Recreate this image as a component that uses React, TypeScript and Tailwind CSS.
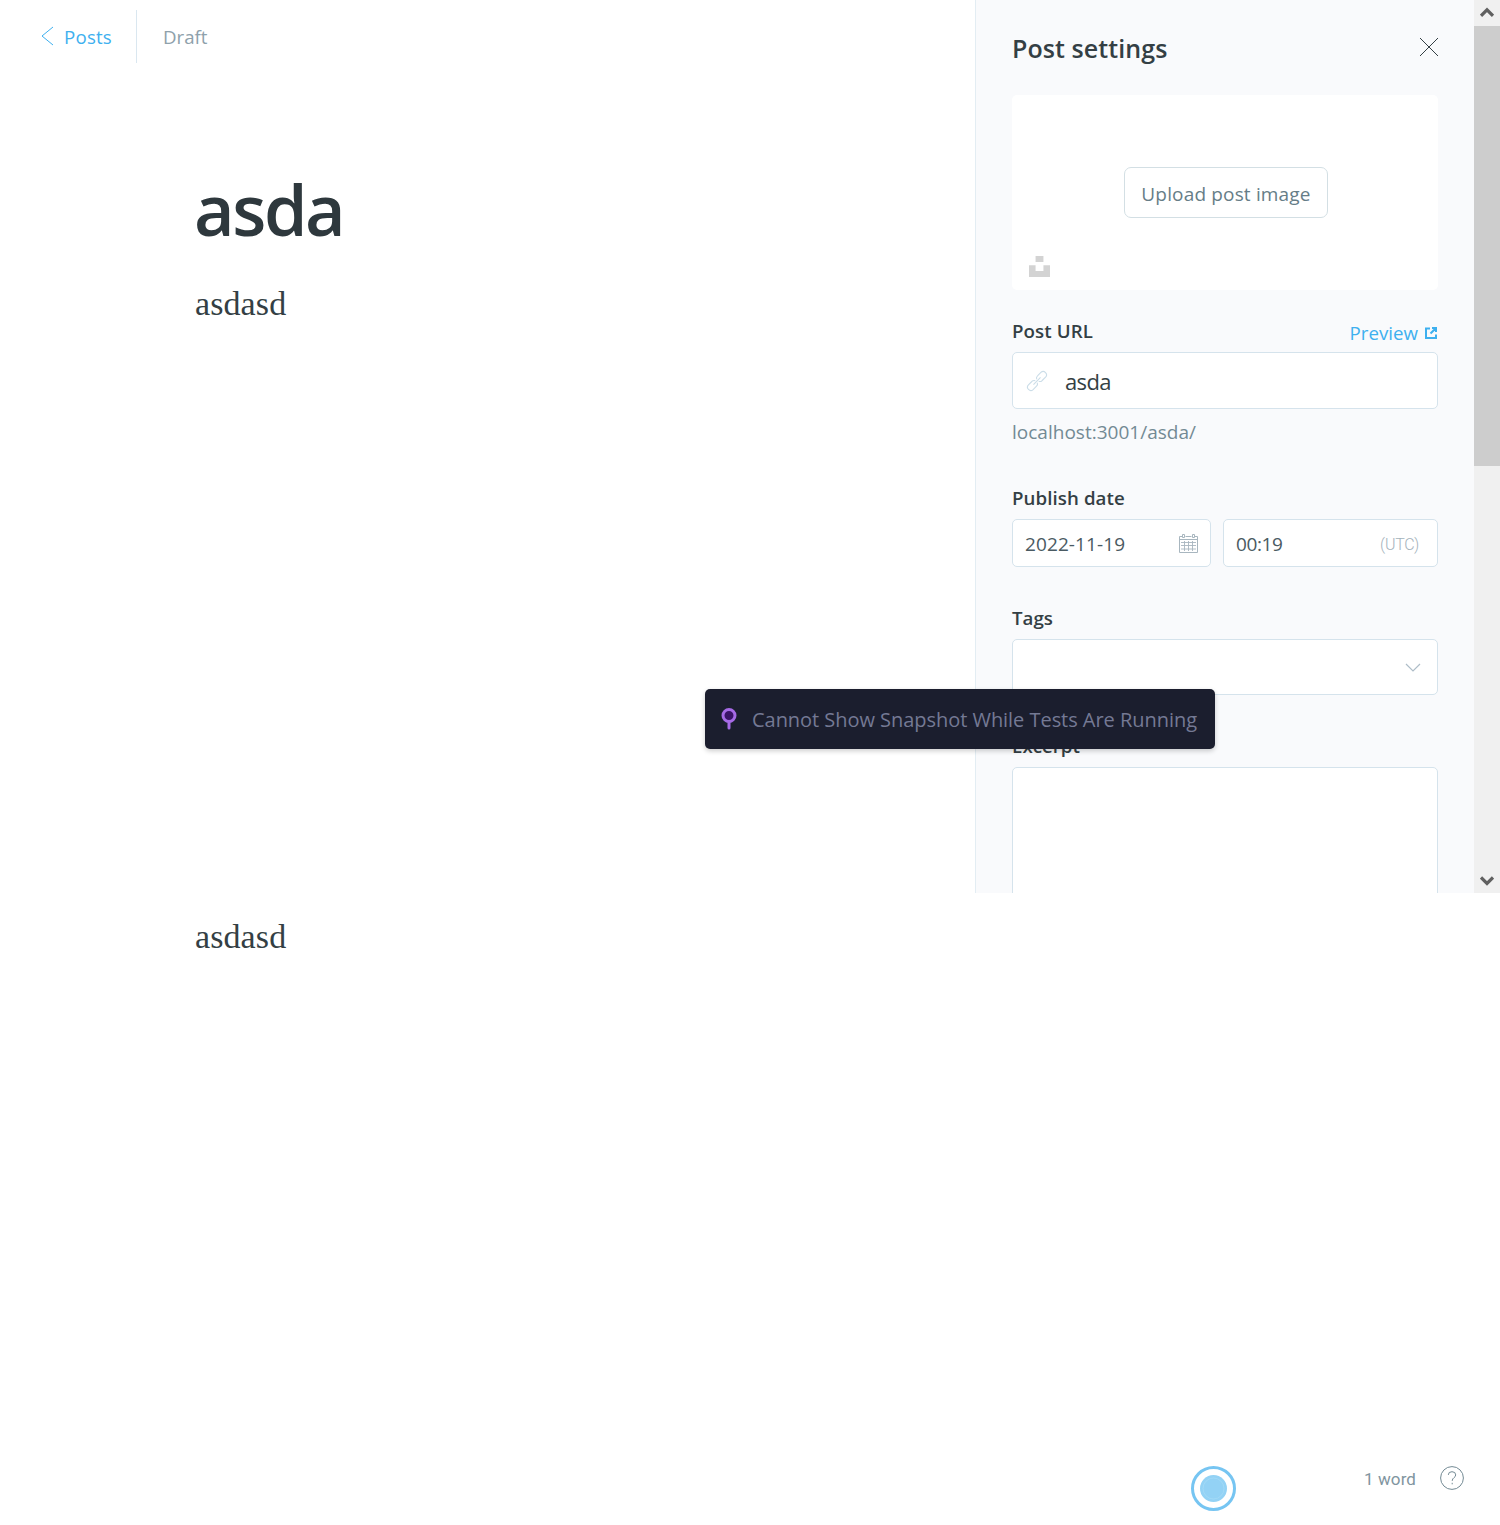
function ScrollChevron({ down }: { down?: boolean }) {
  return (
    <svg viewBox="0 0 14 12" className="h-3 w-3.5">
      <path d={down ? "M1 3.4 7 9.4 13 3.4" : "M1 8.8 7 2.8 13 8.8"} fill="none" stroke="#606060" strokeWidth="3.2" />
    </svg>
  );
}

function LinkIcon() {
  return (
    <svg viewBox="0 0 20 20" className="size-5 overflow-visible text-[#cbdde8]" fill="none" stroke="currentColor" strokeWidth="1.1">
      <g transform="rotate(-45 10 10)">
        <path d="M9 11.4A3.2 3.2 0 0 1 6 13.3H1.2A3.3 3.3 0 0 1-2 10 3.3 3.3 0 0 1 1.2 6.7H6A3.2 3.2 0 0 1 9 8.6M11 8.6a3.2 3.2 0 0 1 3-1.9h4.8A3.3 3.3 0 0 1 22 10a3.3 3.3 0 0 1-3.2 3.3H14a3.2 3.2 0 0 1-3-1.9M5 10h10" />
      </g>
    </svg>
  );
}

function CalendarIcon() {
  return (
    <svg viewBox="0 0 19 19" className="size-[19px] text-[#a8b6bf]" fill="none" stroke="currentColor">
      <path d="M3.5 2.5h-3v16h18v-16h-3M6.5 2.5h6M.5 5.5h18" />
      <path d="M3.5.5h2v3h-2zM13.5.5h2v3h-2z" />
      <path d="M2 8.5h15M2 11.5h15M2 15h15M5.5 7v10M9.5 7v10M13.5 7v10" strokeWidth="0.9" />
    </svg>
  );
}

const label = "h-6 shrink-0 font-semibold leading-6 text-[#343f44]";
const field = "flex shrink-0 items-center rounded-[5px] border border-[#d5e3ec] bg-white";

export default function App() {
  return (
    <div className="relative h-[1525px] w-[1500px] overflow-hidden bg-white font-['Open_Sans',sans-serif] text-[18.7px] leading-6">
      <div className="flex h-[893px]">
        <main className="w-[975px]">
          <header className="flex h-[63px] items-end">
            <a className="flex h-[53px] w-[136px] items-center pl-10 text-[#3eb0ef]">
              <svg viewBox="0 0 14 20" className="mb-0.5 h-5 w-3.5">
                <path d="M13 1 2 10 13 19" fill="none" stroke="currentColor" />
              </svg>
              <span className="ml-[10px] tracking-[0.2px]">Posts</span>
            </a>
            <span className="flex h-[53px] items-center border-l border-[#dae7f0] pl-[26px] text-[#8ea1ab]">Draft</span>
          </header>
          <article className="pl-[195px] pt-[102px]">
            <h1 className="-ml-px text-[70px] font-semibold leading-[88px] tracking-[-2.4px] text-[#2e383d]">asda</h1>
            <p className="mt-[31px] font-['Liberation_Serif',serif] text-[34px] leading-10 tracking-[0.1px] text-[#343f44]">asdasd</p>
            <p className="mt-[593px] font-['Liberation_Serif',serif] text-[34px] leading-10 tracking-[0.1px] text-[#343f44]">asdasd</p>
          </article>
        </main>

        <aside className="flex h-[893px] w-[499px] shrink-0 flex-col overflow-hidden border-l border-[#e3edf3] bg-[#f9fafc] px-9">
          <div className="flex h-[95px] w-[427px] shrink-0 items-center justify-between">
            <h2 className="text-[25px] font-semibold tracking-[0.08px] text-[#343f44]">Post settings</h2>
            <svg viewBox="0 0 20 20" className="-mt-px size-5">
              <path d="m1 1 18 18M19 1 1 19" stroke="#343f44" fill="none" strokeWidth="1" />
            </svg>
          </div>

          <div className="flex h-[195px] w-[426px] shrink-0 flex-col rounded-[5px] bg-white pb-[13px] pl-[17px] pt-[72px]">
            <button className="ml-[95px] h-[51px] w-[204px] whitespace-nowrap rounded-[7px] border border-[#d3dfe4] pt-0.5 text-[19px] tracking-[0.16px] text-[#667d87]">
              Upload post image
            </button>
            <svg viewBox="0 0 32 32" className="mt-auto size-[21px]">
              <path d="M10 9V0h12v9H10zm12 5h10v18H0V14h10v9h12v-9z" fill="#d3d3d3" />
            </svg>
          </div>

          <div className="mt-[29px] flex h-[33px] w-[426px] shrink-0 justify-between">
            <span className={`${label} tracking-[0.1px]`}>Post URL</span>
            <a className="mr-px mt-0.5 flex h-6 items-center text-[#3eb0ef]">
              Preview
              <svg viewBox="0 0 12 12" className="mb-px ml-[7px] size-3" fill="none" stroke="currentColor" strokeWidth="2">
                <path d="M5 1.5H1V11h10V7.5M7 1h4v4M10.8 1.2 5.5 6.5" />
              </svg>
            </a>
          </div>
          <div className={`${field} h-[57px] w-[426px] pl-[14px]`}>
            <LinkIcon />
            <span className="ml-[18px] text-[22px] tracking-[-0.6px] text-[#343f44]">asda</span>
          </div>
          <p className="mt-[11px] h-6 shrink-0 text-[19px] tracking-[0.01px] text-[#738a94]">localhost:3001/asda/</p>

          <div className={`${label} mt-[42px] tracking-[0.08px]`}>Publish date</div>
          <div className="mt-[9px] flex shrink-0 gap-3">
            <div className={`${field} h-12 w-[199px] justify-between pl-3 pr-3`}>
              <span className="pt-0.5 text-[19px] tracking-[0.1px] text-[#4a5a62]">2022-11-19</span>
              <CalendarIcon />
            </div>
            <div className={`${field} h-12 w-[215px] justify-between pl-3 pr-[18px]`}>
              <span className="pt-0.5 text-[19px] tracking-[-0.4px] text-[#4a5a62]">00:19</span>
              <span className="pt-[3px] font-['Roboto',sans-serif] text-base font-light tracking-[-0.3px] text-[#a3b2bb]">(UTC)</span>
            </div>
          </div>

          <div className={`${label} mt-[39px]`}>Tags</div>
          <div className={`${field} mt-[9px] h-14 w-[426px] justify-end pr-4`}>
            <svg viewBox="0 0 16 10" className="mt-px h-2.5 w-4">
              <path d="m1 1 7 7 7-7" fill="none" stroke="#aebdc8" strokeWidth="1.2" />
            </svg>
          </div>

          <div className={`${label} mt-[39px]`}>Excerpt</div>
          <div className="mt-[9px] h-[150px] w-[426px] shrink-0 rounded-[5px] border border-[#d5e3ec] bg-white" />
        </aside>

        <div className="flex w-[26px] shrink-0 flex-col items-center bg-[#f0f0f0]">
          <div className="flex h-[26px] shrink-0 items-center justify-center"><ScrollChevron /></div>
          <div className="h-[440px] w-full bg-[#cdcdcd]" />
          <div className="mt-auto flex h-[26px] items-center justify-center"><ScrollChevron down /></div>
        </div>
      </div>

      <footer className="mt-[573px] flex h-[45px] items-start pl-[1191px]">
        <svg viewBox="0 0 46 46" className="size-[46px]">
          <circle cx="22.5" cy="22.5" r="21" fill="none" stroke="#76c5f2" strokeWidth="3" />
          <circle cx="22.5" cy="22.5" r="13.5" fill="#93d2f5" />
          <circle cx="22.5" cy="22.5" r="10.5" fill="none" stroke="#a5daf6" strokeWidth="0.8" />
        </svg>
        <span className="ml-[127px] mt-px w-[52px] whitespace-nowrap font-['Roboto',sans-serif] text-[17px] font-normal tracking-[0.1px] text-[#8195a0]">1 word</span>
        <svg viewBox="0 0 24 24" className="ml-6 size-6" fill="none" stroke="#738a94">
          <circle cx="12" cy="12" r="11.4" />
          <path d="M8.3 8.9a3.7 3.2 0 0 1 7.4 0c0 2.9-3.5 2.6-3.5 6M12.2 16.8v1.5" />
        </svg>
      </footer>

      <div className="absolute left-[705px] top-[689px] flex h-[60px] w-[510px] items-center rounded-[5px] bg-[#1b1e2e] pl-4 shadow-[0_2px_5px_rgba(0,0,0,0.2)]">
        <svg viewBox="0 0 16 22" className="h-[22px] w-4" stroke="#a66ae6" strokeWidth="3">
          <path d="M8 14v6" strokeLinecap="round" />
          <circle cx="8" cy="7.5" r="6" fill="#3a1367" />
        </svg>
        <span className="ml-[15px] whitespace-nowrap pt-0.5 text-[20px] tracking-[-0.04px] text-[#747994]">
          Cannot Show Snapshot While Tests Are Running
        </span>
      </div>
    </div>
  );
}
